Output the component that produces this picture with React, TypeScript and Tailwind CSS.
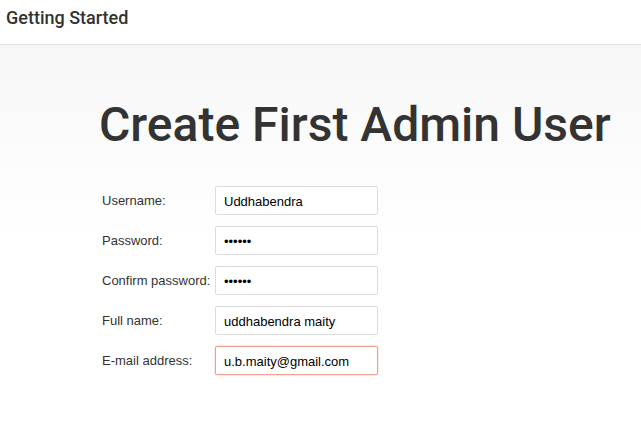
import React from 'react';

const fields = [
  { label: 'Username:', value: 'Uddhabendra', type: 'text' },
  { label: 'Password:', value: 'secret', type: 'password' },
  { label: 'Confirm password:', value: 'secret', type: 'password' },
  { label: 'Full name:', value: 'uddhabendra maity', type: 'text' },
  { label: 'E-mail address:', value: 'u.b.maity@gmail.com', type: 'text', focus: true },
];

const App: React.FC = () => {
  return (
    <div className="min-h-screen bg-white" style={{ fontFamily: 'Roboto, sans-serif' }}>
      {/* Header */}
      <div className="h-[45px] border-b border-[#e2e2e2] bg-white px-[6px] flex items-center">
        <h2 className="text-[18px] font-medium text-[#333] leading-none -mt-[8px]">Getting Started</h2>
      </div>

      <div className="bg-gradient-to-b from-[#f7f7f7] via-white to-white h-[380px] pt-[56px]">
        <h1 className="ml-[99px] text-[48px] font-medium text-[#333] leading-none">
          Create First Admin User
        </h1>

        <div
          className="ml-[102px] mt-[37px] flex flex-col gap-[11px]"
          style={{ fontFamily: '"Liberation Sans", Arial, sans-serif' }}
        >
          {fields.map((f) => (
            <div key={f.label} className="flex items-start">
              <label className="w-[113px] text-[13px] text-[#333] pt-[5px]">{f.label}</label>
              <input
                type={f.type}
                defaultValue={f.value}
                readOnly
                className={
                  f.focus
                    ? 'w-[163px] h-[29px] rounded-[2px] border border-[#f0a090] bg-white px-[8px] pt-[2px] text-[13px] text-black outline-none shadow-[0_0_2px_#f5b0a0]'
                    : 'w-[163px] h-[29px] rounded-[2px] border border-[#dcdcdc] bg-white px-[8px] pt-[2px] text-[13px] text-black outline-none'
                }
              />
            </div>
          ))}
        </div>
      </div>
    </div>
  );
};

export default App;
